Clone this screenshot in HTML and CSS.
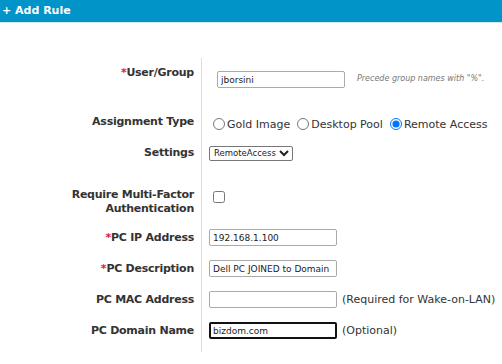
FILE: index.html
```html
<!DOCTYPE html>
<html lang="en">
<head>
  <meta charset="UTF-8">
  <title>Add Rule</title>
  <link rel="stylesheet" href="styles.css">
</head>
<body>

  <!-- Title bar -->
  <div class="title-bar">+ Add Rule</div>

  <!-- Rule form -->
  <div class="rule-form">
    <div class="row row-user">
      <div class="label"><span class="req">*</span>User/Group</div>
      <div class="value">
        <input type="text" class="field field-user" value="jborsini">
        <span class="hint">Precede group names with "%".</span>
      </div>
    </div>

    <div class="row row-type">
      <div class="label">Assignment Type</div>
      <div class="value radios">
        <label><input type="radio" name="atype">Gold Image</label>
        <label><input type="radio" name="atype">Desktop Pool</label>
        <label><input type="radio" name="atype" checked>Remote Access</label>
      </div>
    </div>

    <div class="row row-settings">
      <div class="label">Settings</div>
      <div class="value">
        <select class="settings">
          <option>RemoteAccess</option>
        </select>
      </div>
    </div>

    <div class="row row-mfa">
      <div class="label">Require Multi-Factor<br>Authentication</div>
      <div class="value">
        <input type="checkbox" class="check">
      </div>
    </div>

    <div class="row">
      <div class="label"><span class="req">*</span>PC IP Address</div>
      <div class="value">
        <input type="text" class="field" value="192.168.1.100">
      </div>
    </div>

    <div class="row">
      <div class="label"><span class="req">*</span>PC Description</div>
      <div class="value">
        <input type="text" class="field" value="Dell PC JOINED to Domain">
      </div>
    </div>

    <div class="row">
      <div class="label">PC MAC Address</div>
      <div class="value">
        <input type="text" class="field" value="">
        <span class="note">(Required for Wake-on-LAN)</span>
      </div>
    </div>

    <div class="row row-last">
      <div class="label">PC Domain Name</div>
      <div class="value">
        <input type="text" class="field focused" value="bizdom.com">
        <span class="note">(Optional)</span>
      </div>
    </div>
  </div>

</body>
</html>
```

FILE: styles.css
```css
body {
  margin: 0;
  font-family: "DejaVu Sans", Verdana, sans-serif;
  color: #222;
  background: #fff;
}
.title-bar {
  height: 22px;
  line-height: 21px;
  padding-left: 2px;
  background-color: #0094c8;
  color: #fff;
  font-size: 11px;
  font-weight: bold;
  border-bottom: 1px solid #d6ecf5;
}
.rule-form {
  margin-top: 35px;
}
.row {
  display: grid;
  grid-template-columns: 201px 1fr;
  height: 31px;
}
.label {
  align-self: center;
  padding-right: 7px;
  text-align: right;
  font-size: 11px;
  font-weight: bold;
  letter-spacing: -0.25px;
  line-height: 14px;
  color: #333;
}
.req {
  color: #e0202a;
}
.value {
  display: flex;
  align-items: center;
  padding-left: 7px;
  border-left: 1px solid #ddd;
  white-space: nowrap;
}
.row-user {
  height: 46px;
}
.row-user .label {
  align-self: start;
  padding-top: 8px;
}
.row-user .value {
  align-items: start;
  padding-top: 13px;
}
.row-type {
  height: 36px;
}
.row-type .value {
  padding-top: 4px;
}
.row-settings {
  height: 26px;
}
.row-mfa {
  height: 56px;
}
.row-mfa .label {
  padding-top: 16px;
}
.row-mfa .value {
  padding-top: 6px;
}
.row-last {
  height: 37px;
}
.row-last .label,
.row-last .value {
  padding-bottom: 6px;
}
.field {
  box-sizing: border-box;
  width: 128px;
  height: 17px;
  margin: 0;
  padding: 1px 3px;
  border: 1px solid #aaa;
  border-radius: 2px;
  font-family: "DejaVu Sans", Tahoma, sans-serif;
  font-size: 9px;
  color: #222;
}
.field-user {
  margin-left: 8px;
}
.focused {
  border: 2px solid #111;
  padding: 0 2px;
}
.hint {
  margin-left: 12px;
  margin-top: 3px;
  font-size: 8px;
  font-style: italic;
  color: #777;
}
.note {
  margin-left: 5px;
  font-size: 11px;
  color: #333;
}
.radios label {
  display: flex;
  align-items: center;
  margin-right: 3px;
  font-size: 11px;
  color: #333;
}
.radios input {
  width: 12px;
  height: 12px;
  margin: 0 2px 0 4px;
}
.settings {
  height: 15px;
  margin: 0;
  padding: 0;
  font-family: "DejaVu Sans", Tahoma, sans-serif;
  font-size: 8.5px;
  color: #222;
  border: 1px solid #777;
  border-radius: 2px;
  background: #fff;
}
.check {
  width: 12px;
  height: 12px;
  margin: 0 0 0 4px;
}
```
